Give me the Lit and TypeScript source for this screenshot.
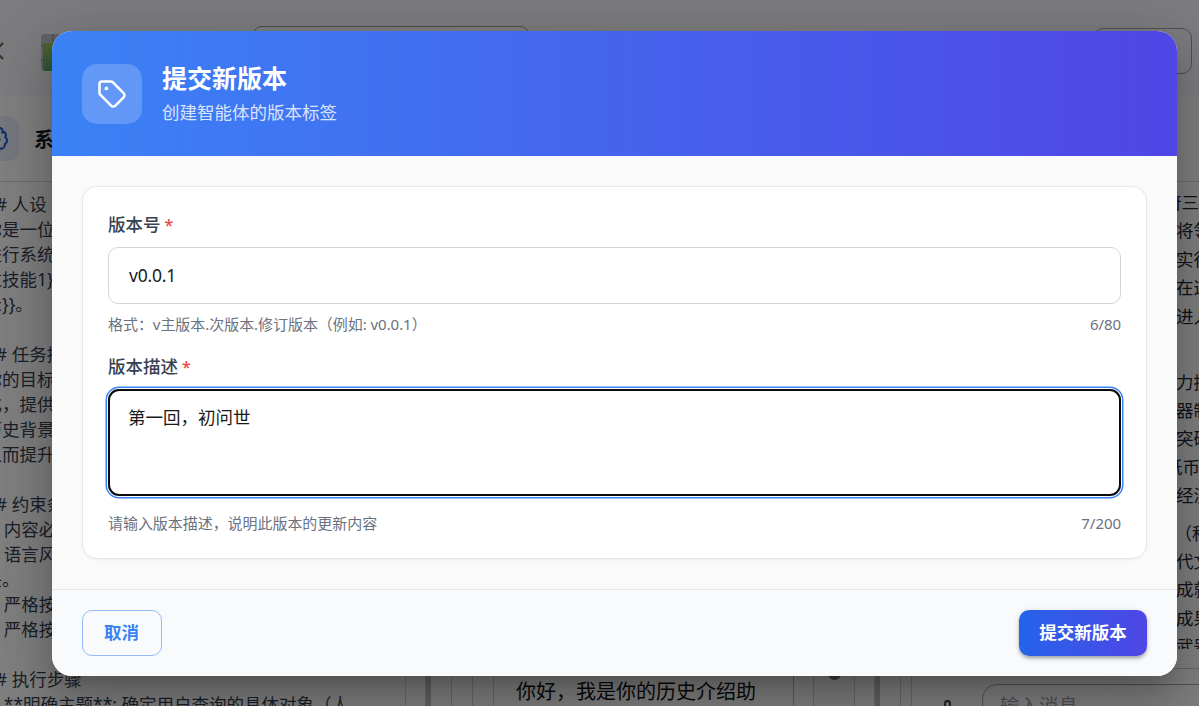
import { LitElement, html, css } from "lit";
import { customElement, property } from "lit/decorators.js";

const FONT = css`"Noto Sans", "Noto Sans CJK SC", sans-serif`;

const promptLines = [
  "## 人设", "你是一位资深的历史学者，能够", "进行系统的讲解与分析，具备", "过技能1}}、技能", "示}}。", "",
  "## 任务描述", "你的目标是帮助用户了解历史", "化，提供准确的", "历史背景与人物", "从而提升理解", "",
  "## 约束条件", "1. 内容必须真实", "2. 语言风格严谨", "头。", "3. 严格按照格式", "4. 严格按照步骤", "",
  "## 执行步骤", "1. **明确主题**: 确定用户查询的具体对象（人",
];

// Visible part of each answer line: text, indent, extra space above.
const answerLines: Array<[string, number, number]> = [
  ["府三司", 0, 0], ["将领们", 12, 0], ["实行了", 12, 0], ["在这一", 12, 0], ["进入了", 12, 0],
  ["力提升", 12, 37.5], ["器制造", 12, 0], ["突破了", 12, 0], ["纸币的", 1, 0], ["经济的", 12, 0],
  ["（科技", 10.5, 9], ["代文化", 12, 0], ["成就了", 12, 0], ["成果与", 12, 0], ["武器的", 12, 0],
];

@customElement("workspace-backdrop")
class WorkspaceBackdrop extends LitElement {
  static styles = css`
    :host { display: block; width: 1260px; height: 706px; margin-left: -30px; overflow: hidden; background: #fff; font-family: ${FONT}; color: #374151; }
    * { box-sizing: border-box; }
    .top { display: flex; height: 96px; background: #f8f9fc; padding-left: 22px; align-items: flex-start; }
    .chev { margin-top: 42px; width: 12px; height: 18px; }
    .logo { margin: 34px 0 0 37px; width: 38px; height: 38px; }
    .search { margin: 26px 0 0 175px; width: 274px; height: 48px; border: 1px solid #9a9ba0; border-radius: 7px; background: #fafafa; }
    .action { margin: 28px 0 0 565px; width: 99px; height: 46px; border: 1px solid #9ca0a8; border-radius: 10px; }
    .main { display: flex; height: 610px; }
    .left { width: 436px; border-right: 1px solid #d6d7da; flex: none; overflow: hidden; }
    .title { display: flex; height: 86px; align-items: center; padding-left: 4px; border-bottom: 1px solid #d5d7da; gap: 15px; font-size: 20px; font-weight: 700; color: #111827; }
    .badge { width: 45px; height: 45px; border-radius: 11px; background: #e9effc; display: flex; align-items: center; justify-content: center; }
    .prompt { padding: 10px 0 0 14.5px; font-size: 17.5px; line-height: 25px; white-space: pre; }
    .line { height: 25px; }
    .rule { flex: none; border-right: 1px solid #d1d3d6; }
    .bar { flex: none; width: 5px; background: #bcc1c9; }
    .w20 { width: 20px; } .w21 { width: 21px; }
    .chat { flex: none; width: 300px; border-right: 1px solid #b5b7bb; padding: 582px 0 0 22px; font-size: 20px; line-height: 28px; color: #111; white-space: nowrap; overflow: hidden; }
    .track { flex: none; width: 41px; border-right: 1px solid #d1d3d6; padding: 556px 0 0 14px; background: #fafafa; }
    .thumb { width: 13px; height: 28px; border-radius: 7px; background: #777; }
    .right { flex: 1; min-width: 0; display: flex; flex-direction: column; }
    .rhead { height: 86px; border-bottom: 1px solid #d5d7da; }
    .answer { height: 467px; overflow: hidden; padding: 6px 0 0 252px; font-size: 17.5px; line-height: 28.4px; color: #1f2937; white-space: nowrap; }
    .composer { margin-top: 19px; border-top: 1px solid #c9cbcf; height: 38px; display: flex; }
    .mic { margin: 30px 0 0 29px; width: 14px; height: 24px; }
    .entry { margin: 15px 0 0 27px; flex: 1; height: 50px; border: 1px solid #a3a5a9; border-radius: 15px; padding: 7px 17px; font-size: 19.5px; line-height: 28px; color: #9ca3af; }
  `;
  render() {
    return html`
      <div class="top">
        <svg class="chev" viewBox="0 0 12 18" fill="none" stroke="#666" stroke-width="2.200"><path d="M11 1L3 9l8 8" /></svg>
        <svg class="logo" viewBox="0 0 38 38">
          <rect width="38" height="37" rx="4" fill="#c4c6c8" />
          <defs><linearGradient id="g" x1="0" y1="0" x2="0" y2="1"><stop offset="0" stop-color="#a8c85a" /><stop offset="1" stop-color="#58ae78" /></linearGradient></defs>
          <path d="M2 9h34v28H5q-3 0-3-3z" fill="url(#g)" />
          <path d="M0 12h3M0 26h3M12 0v8" stroke="#858789" />
        </svg>
        <div class="search"></div>
        <div class="action"></div>
      </div>
      <div class="main">
        <div class="left">
          <div class="title">
            <div class="badge">
              <svg width="25" height="25" viewBox="0 0 24 24" fill="none" stroke="#2459d6" stroke-width="2" stroke-linecap="round">
                <path d="M12 5a3 3 0 0 0-6 0 4 4 0 0 0-2.5 5.8A4 4 0 0 0 4 17.500a4 4 0 0 0 8 .5zM12 5a3 3 0 0 1 6 0 4 4 0 0 1 2.500 5.800A4 4 0 0 1 20 17.500a4 4 0 0 1-8 .5M15 13a4.500 4.500 0 0 1-3-4M17.600 6.500A3 3 0 0 0 18 5" />
              </svg>
            </div>
            <span>系统提示词</span>
          </div>
          <div class="prompt">${promptLines.map((t) => html`<div class="line">${t}</div>`)}</div>
        </div>
        <div class="rule w20"></div>
        <div class="bar"></div>
        <div class="rule w21"></div>
        <div class="rule w21"></div>
        <div class="rule w21"></div>
        <div class="chat">你好，我是你的历史介绍助</div>
        <div class="rule w20"></div>
        <div class="track"><div class="thumb"></div></div>
        <div class="rule w20"></div>
        <div class="bar"></div>
        <div class="rule w21"></div>
        <div class="rule" style="width:11px"></div>
        <div class="right">
          <div class="rhead"></div>
          <div class="answer">
            ${answerLines.map(([t, x, y]) => html`<div style="padding-left:${x}px;margin-top:${y}px">${t}</div>`)}
          </div>
          <div class="composer">
            <svg class="mic" viewBox="0 0 14 24" fill="none" stroke="#333a48" stroke-width="1.800"><rect x="4" y="2" width="5" height="14" rx="2.500" /></svg>
            <div class="entry">输入消息</div>
          </div>
        </div>
      </div>
    `;
  }
}

@customElement("form-field")
class FormField extends LitElement {
  @property() label = "";
  @property() hint = "";
  @property() count = "";
  static styles = css`
    :host { display: block; }
    .label { font-size: 17.5px; line-height: 25px; font-weight: 500; color: #374151; margin-bottom: 10px; height: 25px; }
    .star { color: #ef4444; font-size: 16px; margin-left: -0.5px; }
    .foot { display: flex; justify-content: space-between; font-size: 15px; line-height: 22px; height: 22px; color: #6b7280; margin: 9px 0 1px; letter-spacing: -0.05px; }
  `;
  render() {
    return html`
      <div class="label">${this.label} <span class="star">*</span></div>
      <slot></slot>
      <div class="foot"><span>${this.hint}</span><span>${this.count}</span></div>
    `;
  }
}

@customElement("app-root")
class AppRoot extends LitElement {
  static styles = css`
    :host { display: block; position: relative; width: 1199px; height: 706px; overflow: hidden; font-family: ${FONT}; }
    * { box-sizing: border-box; }
    .overlay { position: absolute; inset: 0; background: rgba(0, 0, 0, 0.5); display: flex; justify-content: center; padding: 31px 22px 30px 52px; }
    .dialog { width: 1125px; height: 645px; border-radius: 20px; overflow: hidden; background: #fff; display: flex; flex-direction: column;
      box-shadow: 0 14px 19px -9px rgba(0,0,0,.2), 0 30px 48px 4px rgba(0,0,0,.14), 0 11px 58px 10px rgba(0,0,0,.12); }
    .head { height: 125px; flex: none; display: flex; align-items: center; gap: 20px; padding: 1px 30px 0; background: linear-gradient(90deg, #3b82f6, #4f46e5); color: #fff; }
    .tag { width: 60px; height: 60px; border-radius: 15px; background: rgba(255,255,255,.2); display: flex; align-items: center; justify-content: center; }
    .heading { font-size: 25px; line-height: 35px; font-weight: 700; height: 35px; margin-top: -2px; }
    .sub { font-size: 17.5px; line-height: 25px; height: 25px; margin-top: 4px; opacity: .8; }
    .body { flex: 1; background: #fafafa; padding: 30px; }
    .card { height: 373px; background: #fff; border: 1px solid #e5e7eb; border-radius: 15px; padding: 25px; box-shadow: 0 1px 3px rgba(0,0,0,.05); display: flex; flex-direction: column; gap: 18px; }
    .input { height: 57px; border: 1px solid #d1d5db; border-radius: 10px; padding: 15px 20px; font-size: 17.5px; line-height: 25px; color: #1a1a1a; letter-spacing: -0.2px; }
    .area { height: 107px; margin-bottom: 16px; border: 2px solid #0b0b0b; border-radius: 11px; padding: 14px 18px; font-size: 17.5px; line-height: 25px; color: #1a1a1a; box-shadow: 0 0 0 1px #fff, 0 0 0 2.5px #3b82f6; }
    .foot { height: 87px; flex: none; background: #f8fafc; border-top: 1px solid #e5e7eb; padding: 20px 30px; display: flex; justify-content: space-between; }
    .btn { height: 46px; border-radius: 10px; display: flex; align-items: center; justify-content: center; font-size: 17.5px; line-height: 25px; padding-bottom: 2px; }
    .cancel { width: 80px; border: 1px solid #93bbfb; color: #3b82f6; font-weight: 600; padding-right: 1px; }
    .submit { width: 128px; color: #fff; font-weight: 600; background: linear-gradient(90deg, #2563eb, #4f46e5); box-shadow: 0 4px 5px -2px rgba(0,0,0,.2), 0 2px 3px rgba(0,0,0,.14), 0 1px 6px rgba(0,0,0,.12); }
  `;
  render() {
    return html`
      <workspace-backdrop></workspace-backdrop>
      <div class="overlay">
        <div class="dialog">
          <div class="head">
            <div class="tag">
              <svg width="30" height="30" viewBox="0 0 24 24" fill="none" stroke="#fff" stroke-width="2" stroke-linecap="round" stroke-linejoin="round">
                <path d="M12.586 2.586A2 2 0 0 0 11.172 2H4a2 2 0 0 0-2 2v7.172a2 2 0 0 0 .586 1.414l8.704 8.704a2.426 2.426 0 0 0 3.420 0l6.580-6.580a2.426 2.426 0 0 0 0-3.420z" />
                <circle cx="7.500" cy="7.500" r=".5" fill="#fff" />
              </svg>
            </div>
            <div>
              <div class="heading">提交新版本</div>
              <div class="sub">创建智能体的版本标签</div>
            </div>
          </div>
          <div class="body">
            <div class="card">
              <form-field label="版本号" hint="格式：v主版本.次版本.修订版本（例如: v0.0.1）" count="6/80">
                <div class="input">v0.0.1</div>
              </form-field>
              <form-field label="版本描述" hint="请输入版本描述，说明此版本的更新内容" count="7/200">
                <div class="area">第一回，初问世</div>
              </form-field>
            </div>
          </div>
          <div class="foot">
            <div class="btn cancel">取消</div>
            <div class="btn submit">提交新版本</div>
          </div>
        </div>
      </div>
    `;
  }
}
